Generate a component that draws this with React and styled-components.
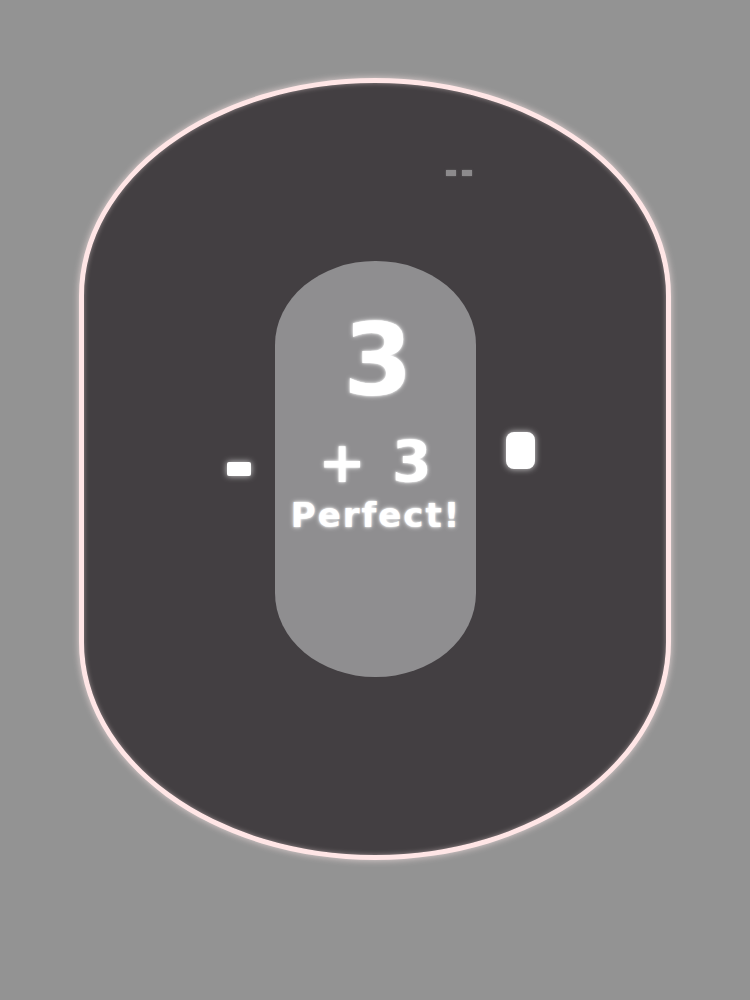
import React from "react"
import styled, { createGlobalStyle } from "styled-components"

const GlobalStyle = createGlobalStyle`
  html, body {
    margin: 0;
    padding: 0;
    background: #939393;
  }
`

function App() {
  return (
    <Page>
      <GlobalStyle />
      <Board>
        <Dashes>
          <Dash />
          <Dash />
        </Dashes>
        <Row>
          <Side $align="end">
            <Minus />
          </Side>
          <Pill>
            <Score>3</Score>
            <Gain>+ 3</Gain>
            <Rating>Perfect!</Rating>
          </Pill>
          <Side $align="start">
            <Block />
          </Side>
        </Row>
      </Board>
    </Page>
  )
}

export default App

const Page = styled.div`
  width: 750px;
  height: 1000px;
  padding-top: 78px;
  box-sizing: border-box;
  display: flex;
  justify-content: center;
  font-family: "DejaVu Sans", "Open Sans", sans-serif;
`

const Board = styled.div`
  position: relative;
  width: 592px;
  height: 782px;
  box-sizing: border-box;
  border: 5px solid #ffe6e6;
  border-radius: 296px / 218px;
  background: #433f42;
  box-shadow: 0 0 7px rgba(255, 235, 235, 0.75),
    inset 0 0 5px rgba(255, 235, 235, 0.45);
  display: flex;
  align-items: center;
  justify-content: center;
`

const Dashes = styled.div`
  position: absolute;
  top: 87px;
  left: 362px;
  display: flex;
  gap: 6px;
`

const Dash = styled.span`
  display: block;
  width: 10px;
  height: 6px;
  background: #8c8a8c;
  box-shadow: 0 0 2px rgba(140, 138, 140, 0.6);
`

const Row = styled.div`
  display: grid;
  grid-template-columns: 1fr auto 1fr;
  align-items: center;
  width: 100%;
`

const Side = styled.div`
  display: flex;
  justify-content: ${(p) => (p.$align === "end" ? "flex-end" : "flex-start")};
  padding: 0 ${(p) => (p.$align === "end" ? "24px" : "0")} 0
    ${(p) => (p.$align === "start" ? "30px" : "0")};
`

const Minus = styled.span`
  display: block;
  width: 24px;
  height: 14px;
  border-radius: 2px;
  background: #ffffff;
  box-shadow: 0 0 6px rgba(255, 255, 255, 0.8);
`

const Block = styled.span`
  display: block;
  width: 29px;
  height: 37px;
  margin-bottom: 38px;
  border-radius: 8px;
  background: #ffffff;
  box-shadow: 0 0 6px rgba(255, 255, 255, 0.8);
`

const Pill = styled.div`
  width: 201px;
  height: 416px;
  border-radius: 100px / 84px;
  background: #8f8e90;
  display: flex;
  flex-direction: column;
  align-items: center;
  padding-top: 52px;
  box-sizing: border-box;
  color: #ffffff;
  font-weight: 700;
  text-shadow: 0 0 5px rgba(255, 255, 255, 0.85), 0 0 2px #ffffff;
`

const Score = styled.div`
  padding-left: 6px;
  font-size: 100px;
  line-height: 96px;
`

const Gain = styled.div`
  margin-top: 26px;
  font-size: 57px;
  line-height: 55px;
  word-spacing: 6px;
`

const Rating = styled.div`
  margin-top: 8px;
  padding-left: 2px;
  font-size: 34px;
  line-height: 34px;
  letter-spacing: 2px;
`
